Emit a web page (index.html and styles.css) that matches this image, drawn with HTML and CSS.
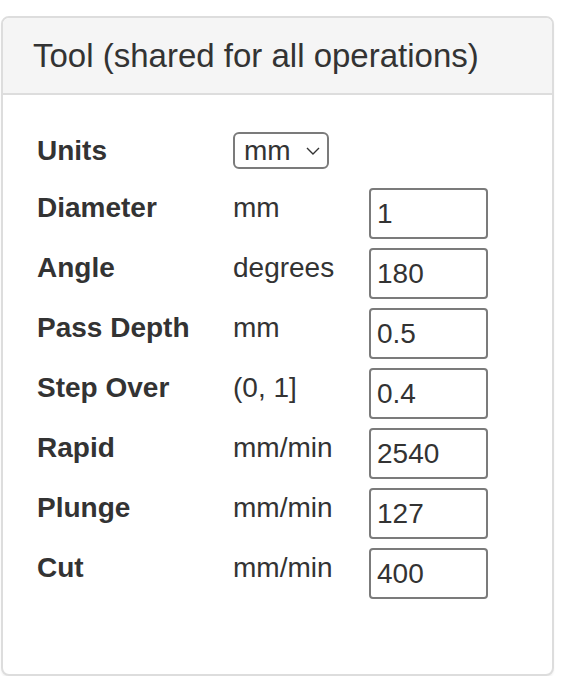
FILE: index.html
```html
<!doctype html>
<html>
<head>
    <title>Tool</title>
    <meta charset="utf-8">
    <link rel="stylesheet" href="styles.css">
</head>
<body>
    <div class="panel">
        <div class="panel-heading">
            <h3 class="panel-title">Tool (shared for all operations)</h3>
        </div>
        <div class="panel-body">
            <div class="fields">
                <div class="field-label">Units</div>
                <div class="select-wrap">
                    <select class="units-select">
                        <option>mm</option>
                        <option>inch</option>
                    </select>
                    <svg class="chevron" width="14" height="8" viewBox="0 0 14 8">
                        <path d="M1 1 L7 7 L13 1" fill="none" stroke="#333" stroke-width="1.4"/>
                    </svg>
                </div>
                <div></div>

                <div class="field-label">Diameter</div>
                <div class="field-unit">mm</div>
                <input class="field-input" type="text" value="1">

                <div class="field-label">Angle</div>
                <div class="field-unit">degrees</div>
                <input class="field-input" type="text" value="180">

                <div class="field-label">Pass Depth</div>
                <div class="field-unit">mm</div>
                <input class="field-input" type="text" value="0.5">

                <div class="field-label">Step Over</div>
                <div class="field-unit">(0, 1]</div>
                <input class="field-input" type="text" value="0.4">

                <div class="field-label">Rapid</div>
                <div class="field-unit">mm/min</div>
                <input class="field-input" type="text" value="2540">

                <div class="field-label">Plunge</div>
                <div class="field-unit">mm/min</div>
                <input class="field-input" type="text" value="127">

                <div class="field-label">Cut</div>
                <div class="field-unit">mm/min</div>
                <input class="field-input" type="text" value="400">
            </div>
        </div>
    </div>
</body>
</html>
```

FILE: styles.css
```css
body {
    margin: 0;
    font-family: "Liberation Sans", Arial, Helvetica, sans-serif;
    color: #333;
    background: #fff;
}

.panel {
    width: 549px;
    margin: 16px 0 0 1px;
    border: 2px solid #ddd;
    border-radius: 8px;
    box-shadow: 0 2px 2px rgba(0, 0, 0, .05);
    background: #fff;
}

.panel-heading {
    padding: 20px 30px 20px 30px;
    background-color: #f5f5f5;
    border-bottom: 2px solid #ddd;
    border-radius: 6px 6px 0 0;
}

.panel-title {
    margin: 0;
    font-size: 33px;
    font-weight: normal;
    line-height: 35px;
}

.panel-body {
    padding: 36px 30px 30px 30px;
}

.fields {
    display: grid;
    grid-template-columns: 200px 136px 119px;
    grid-template-rows: 48px repeat(7, 51px);
    row-gap: 9px;
    align-items: start;
    margin-bottom: 45px;
    font-size: 28px;
    line-height: 40px;
}

.field-label {
    padding-left: 4px;
    font-weight: bold;
}

.fields > .field-label:first-child {
    padding-top: 2px;
    line-height: 36px;
}

.select-wrap {
    position: relative;
    width: 96px;
    height: 37px;
}

.units-select {
    appearance: none;
    -webkit-appearance: none;
    width: 96px;
    height: 37px;
    margin: 0;
    padding: 0 0 0 9px;
    border: 2px solid #7b7b7b;
    border-radius: 6px;
    background: #fff;
    font-family: "Liberation Sans", Arial, sans-serif;
    font-size: 28px;
    color: #333;
}

.chevron {
    position: absolute;
    top: 16px;
    left: 73px;
    pointer-events: none;
}

.field-input {
    box-sizing: border-box;
    width: 119px;
    height: 51px;
    margin: 0;
    padding: 0 6px;
    border: 2px solid #7b7b7b;
    border-radius: 4px;
    font-family: "Liberation Sans", Arial, sans-serif;
    font-size: 28px;
    color: #333;
}
```
